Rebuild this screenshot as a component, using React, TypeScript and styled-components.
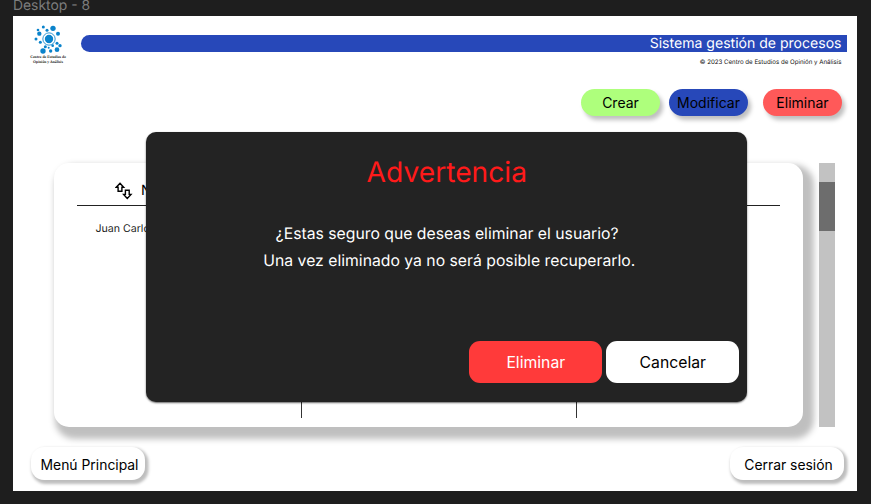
import React from "react";
import styled, { createGlobalStyle } from "styled-components";

const GlobalStyle = createGlobalStyle`
  * { box-sizing: border-box; }
  body {
    margin: 0;
    background: #1e1e1e;
    font-family: Inter, "Liberation Sans", sans-serif;
    font-weight: 400;
    font-optical-sizing: none;
    font-variation-settings: "opsz" 14;
    text-rendering: geometricPrecision;
    overflow: hidden;
  }
  button { font-family: inherit; font-weight: inherit; border: 0; padding: 0; cursor: pointer; }
`;

const Canvas = styled.div`
  width: 871px;
  height: 504px;
  padding-left: 13px;
  overflow: hidden;
  background: #1e1e1e;
`;

const FrameLabel = styled.div`
  height: 16px;
  font-size: 13.9px;
  line-height: 12px;
  color: #7c7c7c;
  white-space: nowrap;
`;

const Frame = styled.main`
  position: relative;
  width: 844px;
  height: 474.5px;
  background: #fff;
  display: flex;
  flex-direction: column;
`;

const Header = styled.header`
  display: flex;
  height: 73px;
  padding: 8px 10px 0 17px;
`;

const Brand = styled.div`
  width: 36px;
  margin-right: 15px;
  display: flex;
  flex-direction: column;
  align-items: center;

  svg { display: block; margin-left: 2px; }
`;

const BrandName = styled.div`
  font: bold 3.8px/4.5px "Liberation Serif", serif;
  color: #222;
  text-align: center;
  white-space: nowrap;
`;

const Banner = styled.div`
  flex: 1;
  padding-top: 11.3px;
  text-align: right;
`;

const Bar = styled.div`
  height: 17px;
  padding-right: 5.5px;
  border-radius: 9px 0 0 9px;
  background: #2748b9;
  color: #fff;
  font-size: 14.06px;
  line-height: 18px;
`;

const Copyright = styled.div`
  padding: 6.7px 5.5px 0 0;
  font-size: 6.15px;
  line-height: 8px;
  color: #111;
`;

const Actions = styled.div`
  display: flex;
  justify-content: flex-end;
  height: 74px;
  padding-right: 15px;
`;

const Pill = styled.button<{ $color: string; $gap?: number }>`
  width: 79px;
  height: 27px;
  margin-left: ${({ $gap }) => $gap ?? 0}px;
  border-radius: 14px;
  background: ${({ $color }) => $color};
  box-shadow: 3px 4px 4px rgba(0, 0, 0, 0.25);
  color: #000;
  font-size: 14px;
  line-height: 27px;
`;

const Content = styled.section`
  display: flex;
  height: 264px;
  padding-left: 41px;
`;

const Card = styled.div`
  width: 749px;
  height: 264px;
  border-radius: 15px;
  background: #fff;
  box-shadow: 6px 7px 6px 4.5px rgba(0, 0, 0, 0.25);
  padding: 12px 23px 9px;
  display: flex;
  flex-direction: column;
`;

const TableHead = styled.div`
  display: flex;
  align-items: center;
  height: 31px;
  padding-left: 38px;
  border-bottom: 1px solid #222;
  font-size: 14px;

  svg { display: block; margin: 2px 8px 0 0; }
`;

const TableBody = styled.div`
  flex: 1;
  display: grid;
  grid-template-columns: 224px 275px 1fr;
`;

const Cell = styled.div`
  padding: 16px 0 0 18.5px;
  border-left: 1px solid #333;
  font-size: 10.6px;
  line-height: 14px;
  color: #222;

  &:first-child { border-left: 0; }
`;

const ScrollTrack = styled.div`
  width: 16px;
  height: 264px;
  margin-left: 16px;
  padding-top: 19px;
  background: #c2c2c2;
`;

const ScrollThumb = styled.div`
  height: 49px;
  background: #6d6d6d;
`;

const Footer = styled.footer`
  display: flex;
  justify-content: space-between;
  padding: 20px 13px 0 18px;
`;

const FooterButton = styled.button`
  width: 114px;
  height: 33px;
  padding-left: 3px;
  border-radius: 13px;
  background: #fff;
  box-shadow: 2px 2.5px 3px 1.5px rgba(0, 0, 0, 0.26);
  color: #000;
  font-size: 13.9px;
  line-height: 36px;
  white-space: nowrap;
`;

const Dialog = styled.div`
  position: absolute;
  left: 133.3px;
  top: 115.7px;
  width: 601px;
  height: 270px;
  padding: 21.3px 8px 0;
  border-radius: 10px;
  background: #232323;
  box-shadow: 0 1px 2px rgba(0, 0, 0, 0.6);
  color: #fff;
  text-align: center;
`;

const DialogTitle = styled.h1`
  margin: 0;
  height: 68.2px;
  color: #ff1a1a;
  font-size: 28.2px;
  font-weight: 400;
  line-height: 38px;
`;

const Message = styled.p`
  margin: 0;
  height: 120.3px;
  padding-left: 5px;
  font-size: 15.75px;
  line-height: 26.5px;
`;

const DialogActions = styled.div`
  display: flex;
  justify-content: flex-end;
  gap: 4px;
`;

const DialogButton = styled.button<{ $danger?: boolean }>`
  width: 133px;
  height: 41.5px;
  border-radius: 11px;
  background: ${({ $danger }) => ($danger ? "#ff3a3a" : "#fff")};
  color: ${({ $danger }) => ($danger ? "#fff" : "#000")};
  font-size: 15.75px;
  line-height: 43.5px;
`;

const DOTS: [number, number, number][] = [
  [131, 80, 4.5], [160, 84, 8], [115, 89, 4], [142, 90, 4.5],
  [119, 100, 6.5], [175, 100, 6], [109, 116, 4.5], [122, 126, 4.5],
  [137, 139, 4.5], [130, 152, 8], [147, 142, 3], [153, 152, 5],
  [159, 136, 4], [172, 148, 7], [172, 129, 4.5], [181, 136, 5],
];

const Logo = () => (
  <svg width="36" height="31" viewBox="94 71 108 93" fill="#0a83cb">
    <circle cx="148" cy="116" r="12.5" />
    <circle cx="148" cy="116" r="18.5" fill="none" stroke="#0a83cb" strokeWidth="2.5" />
    {DOTS.map(([x, y, r]) => <circle key={`${x}-${y}`} cx={x} cy={y} r={r} />)}
  </svg>
);

const SortIcon = () => (
  <svg width="18" height="18" viewBox="0 0 18 18" fill="none" stroke="#000" strokeWidth="1.4" strokeLinejoin="miter">
    <path d="M5 1.2 8.7 5.2H6.9V9.3H3.1V5.2H1.3Z" />
    <path d="M12.3 16.5 8.6 12.4h1.8V8.2h3.8v4.2H16Z" />
  </svg>
);

export default function App() {
  return (
    <>
      <GlobalStyle />
      <Canvas>
        <FrameLabel>Desktop - 8</FrameLabel>
        <Frame>
          <Header>
            <Brand>
              <Logo />
              <BrandName>Centro de Estudios de<br />Opinión y Análisis</BrandName>
            </Brand>
            <Banner>
              <Bar>Sistema gestión de procesos</Bar>
              <Copyright>© 2023 Centro de Estudios de Opinión y Análisis</Copyright>
            </Banner>
          </Header>
          <Actions>
            <Pill $color="#aeff7c">Crear</Pill>
            <Pill $color="#2748b9" $gap={9}>Modificar</Pill>
            <Pill $color="#ff5959" $gap={15}>Eliminar</Pill>
          </Actions>
          <Content>
            <Card>
              <TableHead><SortIcon />Nombre</TableHead>
              <TableBody>
                <Cell>Juan Carlos</Cell>
                <Cell />
                <Cell />
              </TableBody>
            </Card>
            <ScrollTrack><ScrollThumb /></ScrollTrack>
          </Content>
          <Footer>
            <FooterButton>Menú Principal</FooterButton>
            <FooterButton>Cerrar sesión</FooterButton>
          </Footer>
          <Dialog role="alertdialog">
            <DialogTitle>Advertencia</DialogTitle>
            <Message>
              ¿Estas seguro que deseas eliminar el usuario?&nbsp;<br />
              Una vez eliminado ya no será posible recuperarlo.
            </Message>
            <DialogActions>
              <DialogButton $danger>Eliminar</DialogButton>
              <DialogButton>Cancelar</DialogButton>
            </DialogActions>
          </Dialog>
        </Frame>
      </Canvas>
    </>
  );
}
